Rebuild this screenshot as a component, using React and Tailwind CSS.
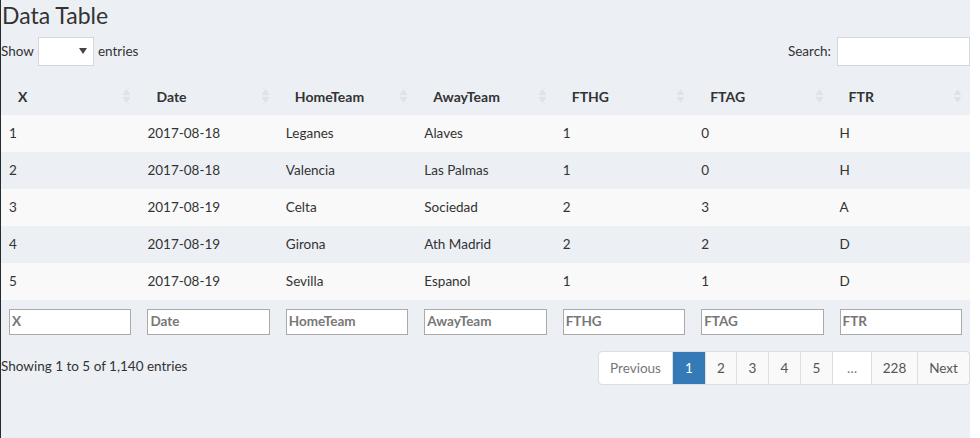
const cols = ["X", "Date", "HomeTeam", "AwayTeam", "FTHG", "FTAG", "FTR"];

const rows = [
  ["1", "2017-08-18", "Leganes", "Alaves", "1", "0", "H"],
  ["2", "2017-08-18", "Valencia", "Las Palmas", "1", "0", "H"],
  ["3", "2017-08-19", "Celta", "Sociedad", "2", "3", "A"],
  ["4", "2017-08-19", "Girona", "Ath Madrid", "2", "2", "D"],
  ["5", "2017-08-19", "Sevilla", "Espanol", "1", "1", "D"],
];

function SortIcon() {
  return (
    <svg width="9" height="16" viewBox="0 0 9 16" className="shrink-0">
      <path d="M4.5 1 L8.5 7 L0.5 7 Z" fill="#dfe2e6" />
      <path d="M4.5 15 L8.5 9 L0.5 9 Z" fill="#dfe2e6" />
    </svg>
  );
}

const pages = [
  { label: "Previous", w: "w-[75px]", cls: "bg-white text-[#777] rounded-l border-l" },
  { label: "1", w: "w-[33px]", cls: "bg-[#337ab7] text-white border-[#337ab7]" },
  { label: "2", w: "w-[31px]", cls: "bg-[#f9f9f9] text-[#555]" },
  { label: "3", w: "w-[32px]", cls: "bg-[#f9f9f9] text-[#555]" },
  { label: "4", w: "w-[32px]", cls: "bg-[#f9f9f9] text-[#555]" },
  { label: "5", w: "w-[32px]", cls: "bg-[#f9f9f9] text-[#555]" },
  { label: "…", w: "w-[39px]", cls: "bg-white text-[#777]" },
  { label: "228", w: "w-[46px]", cls: "bg-[#f9f9f9] text-[#555]" },
  { label: "Next", w: "w-[52px]", cls: "bg-[#f9f9f9] text-[#555] rounded-r" },
];

export default function App() {
  return (
    <div
      className="flex h-[438px] w-[980px] bg-white text-[#333] text-[13.5px]"
      style={{ fontFamily: '"Source Sans Pro", Lato, "Open Sans", sans-serif' }}
    >
      <div className="w-[970px] h-full bg-[#ecf0f5] border-l border-[#222d32] flex flex-col">
        <h2 className="text-[23px] leading-[30px] font-normal ml-px">Data Table</h2>

        {/* Length + search */}
        <div className="flex items-center justify-between mt-[6px] h-[30px]">
          <div className="flex items-center gap-[4px]">
            <span>Show</span>
            <div className="w-[56px] h-[29px] bg-white border border-[#d2d6de] flex items-center justify-end pr-[6px]">
              <svg width="8" height="6" viewBox="0 0 8 6">
                <path d="M0 0 L8 0 L4 6 Z" fill="#444" />
              </svg>
            </div>
            <span>entries</span>
          </div>
          <div className="flex items-center gap-[6px]">
            <span>Search:</span>
            <div className="w-[133px] h-[29px] bg-white border border-[#d2d6de]" />
          </div>
        </div>

        {/* Table */}
        <div className="mt-[14px]">
          <div className="grid grid-cols-7 h-[35px] items-center font-bold text-[14px] pb-[3px]">
            {cols.map((c) => (
              <div key={c} className="flex items-center justify-between pl-[17px] pr-[8px]">
                <span>{c}</span>
                <SortIcon />
              </div>
            ))}
          </div>
          {rows.map((r, i) => (
            <div
              key={i}
              className={`grid grid-cols-7 h-[37px] items-center ${i % 2 === 0 ? "bg-[#f9f9f9]" : ""}`}
            >
              {r.map((v, j) => (
                <div key={j} className="pl-[8px]">
                  {v}
                </div>
              ))}
            </div>
          ))}
          <div className="grid grid-cols-7 h-[43px] items-center">
            {cols.map((c) => (
              <div key={c} className="pl-[8px] pr-[8px]">
                <div className="h-[26px] bg-white border border-[#aaa] flex items-center pl-[2px] font-bold text-[#777]">
                  {c}
                </div>
              </div>
            ))}
          </div>
        </div>

        {/* Info + pagination */}
        <div className="flex items-center justify-between mt-[8px]">
          <span className="-mt-[3px]">Showing 1 to 5 of 1,140 entries</span>
          <div className="flex h-[34px]">
            {pages.map((p) => (
              <div
                key={p.label}
                className={`${p.w} h-full flex items-center justify-center border-y border-r border-[#ddd] ${p.cls}`}
              >
                {p.label}
              </div>
            ))}
          </div>
        </div>
      </div>
    </div>
  );
}
